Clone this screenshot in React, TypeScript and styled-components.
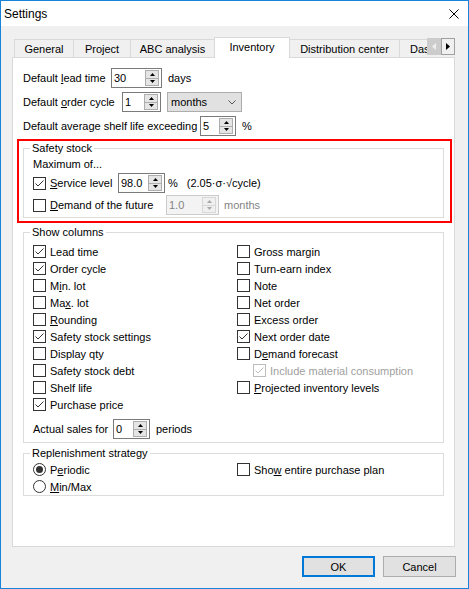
import React from "react";
import styled, { createGlobalStyle, css } from "styled-components";

const GlobalStyle = createGlobalStyle`
  html, body { margin: 0; padding: 0; background: #ffffff; }
  body {
    font-family: "Liberation Sans", Arial, sans-serif;
    font-size: 11px;
    color: #000;
  }
  * { box-sizing: border-box; }
`;

const Window = styled.div`
  width: 469px;
  height: 589px;
  border: 1px solid #1883d7;
  background: #f0f0f0;
  display: flex;
  flex-direction: column;
  overflow: hidden;
`;

const TitleBar = styled.div`
  flex: none;
  height: 25px;
  background: #ffffff;
  display: flex;
  align-items: center;
  justify-content: space-between;
  padding: 0 9px 0 3px;
  font-size: 12px;
`;

const Body = styled.div`
  flex: 1;
  display: flex;
  flex-direction: column;
  padding: 11px 13px 0 11px;
`;

const TabStrip = styled.div`
  position: relative;
  z-index: 1;
  flex: none;
  height: 21px;
  display: flex;
  align-items: flex-end;
  padding-left: 3px;
  overflow: hidden;
`;

const Tab = styled.div<{ $w: number; $active?: boolean; $start?: boolean }>`
  flex: none;
  width: ${(p) => p.$w}px;
  height: 18px;
  margin-bottom: 1px;
  margin-left: -1px;
  border: 1px solid #d9d9d9;
  border-bottom: none;
  background: #f0f0f0;
  display: flex;
  align-items: center;
  justify-content: ${(p) => (p.$start ? "flex-start" : "center")};
  padding: 1px 0 0 ${(p) => (p.$start ? 10 : 0)}px;
  white-space: nowrap;
  ${(p) =>
    p.$active &&
    css`
      position: relative;
      z-index: 1;
      height: 21px;
      margin-bottom: 0;
      background: #ffffff;
      padding-top: 0;
      padding-bottom: 2px;
    `}
`;

const ScrollButtons = styled.div`
  position: absolute;
  top: 1px;
  right: 0;
  z-index: 2;
  display: flex;
`;

const ScrollBtn = styled.div<{ $disabled?: boolean }>`
  width: 14px;
  height: 17px;
  display: flex;
  align-items: center;
  justify-content: center;
  border: 1px solid ${(p) => (p.$disabled ? "#cccccc" : "#a0a0a0")};
  background: ${(p) => (p.$disabled ? "#cccccc" : "#f0f0f0")};
`;

const Pane = styled.div`
  flex: none;
  height: 490px;
  margin-top: -1px;
  background: #ffffff;
  border: 1px solid #d9d9d9;
  padding: 10px 10px 0 10px;
  display: flex;
  flex-direction: column;
`;

const FieldRow = styled.div<{ $gap?: number; $mt?: number }>`
  display: flex;
  align-items: center;
  height: 20px;
  gap: ${(p) => p.$gap ?? 6}px;
  margin-top: ${(p) => p.$mt ?? 0}px;
  white-space: nowrap;
`;

const FieldLabel = styled.span<{ $w: number }>`
  flex: none;
  width: ${(p) => p.$w}px;
  white-space: nowrap;
`;

const Key = styled.span`
  text-decoration: underline;
  text-underline-offset: 1px;
`;

const Muted = styled.span`
  color: #838383;
`;

const Formula = styled.span<{ $ml: number }>`
  margin-left: ${(p) => p.$ml}px;
`;

const SpinBox = styled.div<{ $w: number; $disabled?: boolean }>`
  flex: none;
  width: ${(p) => p.$w}px;
  height: 20px;
  border: 1px solid ${(p) => (p.$disabled ? "#cccccc" : "#7a7a7a")};
  background: ${(p) => (p.$disabled ? "#f3f3f3" : "#ffffff")};
  color: ${(p) => (p.$disabled ? "#838383" : "#000")};
  display: flex;
  align-items: stretch;
  padding: 1px 2px 1px 2px;
`;

const SpinValue = styled.span`
  flex: 1;
  display: flex;
  align-items: center;
  min-width: 0;
`;

const SpinButtons = styled.div<{ $disabled?: boolean }>`
  flex: none;
  width: 14px;
  display: flex;
  flex-direction: column;
  border: 1px solid ${(p) => (p.$disabled ? "#d8d8d8" : "#adadad")};
  background: ${(p) => (p.$disabled ? "#f0f0f0" : "#e5e5e5")};
`;

const SpinHalf = styled.div<{ $disabled?: boolean; $top?: boolean }>`
  flex: 1;
  display: flex;
  align-items: center;
  justify-content: center;
  color: ${(p) => (p.$disabled ? "#a8a8a8" : "#000")};
  ${(p) =>
    p.$top &&
    css`
      border-bottom: 1px solid ${p.$disabled ? "#d8d8d8" : "#adadad"};
    `}
`;

const Combo = styled.div`
  flex: none;
  width: 75px;
  height: 20px;
  border: 1px solid #adadad;
  background: #e1e1e1;
  display: flex;
  align-items: center;
  justify-content: space-between;
  padding: 0 5px 0 3px;
`;

const Highlight = styled.div`
  margin: 3px -8px 0 -6px;
  border: 2px solid #ff0000;
  padding: 0 6px 3px 4px;
`;

const Group = styled.fieldset<{ $mt?: number }>`
  margin: ${(p) => p.$mt ?? 0}px 0 0 0;
  padding: 0;
  min-width: 0;
  border: 1px solid #dcdcdc;
`;

const Legend = styled.legend`
  margin-left: 6px;
  padding: 0 2px;
  line-height: 14px;
  height: 14px;
`;

const GroupBody = styled.div<{ $pt: number; $pb: number }>`
  padding: ${(p) => p.$pt}px 0 ${(p) => p.$pb}px 9px;
  display: flex;
  flex-direction: column;
`;

const PlainLine = styled.div`
  height: 14px;
  line-height: 14px;
`;

const Columns = styled.div`
  display: grid;
  grid-template-columns: 204px 1fr;
`;

const Column = styled.div`
  display: flex;
  flex-direction: column;
`;

const CheckItem = styled.div<{ $indent?: number; $w?: number; $disabled?: boolean; $h?: number }>`
  flex: none;
  display: flex;
  align-items: center;
  gap: 4px;
  height: ${(p) => p.$h ?? 17}px;
  padding-left: ${(p) => p.$indent ?? 0}px;
  width: ${(p) => (p.$w ? `${p.$w}px` : "auto")};
  color: ${(p) => (p.$disabled ? "#a0a0a0" : "#000")};
  white-space: nowrap;
`;

const Box = styled.span<{ $disabled?: boolean }>`
  flex: none;
  width: 13px;
  height: 13px;
  border: 1px solid ${(p) => (p.$disabled ? "#bcbcbc" : "#333333")};
  background: #ffffff;
  display: flex;
  align-items: center;
  justify-content: center;
`;

const RadioCircle = styled.span`
  flex: none;
  width: 13px;
  height: 13px;
  border-radius: 50%;
  border: 1px solid #333333;
  background: #ffffff;
  display: flex;
  align-items: center;
  justify-content: center;
`;

const RadioDot = styled.span`
  width: 7px;
  height: 7px;
  border-radius: 50%;
  background: #333333;
`;

const ButtonRow = styled.div`
  display: flex;
  justify-content: flex-end;
  gap: 8px;
  margin: 9px -1px 0 0;
`;

const Button = styled.div<{ $default?: boolean }>`
  width: 73px;
  height: 21px;
  display: flex;
  align-items: center;
  justify-content: center;
  background: #e1e1e1;
  border: ${(p) => (p.$default ? "2px solid #0078d7" : "1px solid #adadad")};
`;

const Check = ({ color }: { color: string }) => (
  <svg width="11" height="11" viewBox="0 0 11 11">
    <polyline points="1.5,5.5 4,8 9.5,2.5" fill="none" stroke={color} strokeWidth="1" />
  </svg>
);

const Checkbox = ({ checked, disabled }: { checked?: boolean; disabled?: boolean }) => (
  <Box $disabled={disabled}>{checked && <Check color={disabled ? "#bcbcbc" : "#333333"} />}</Box>
);

const UpArrow = () => (
  <svg width="5" height="3" viewBox="0 0 5 3">
    <polygon points="0,3 2.5,0 5,3" fill="currentColor" />
  </svg>
);
const DownArrow = () => (
  <svg width="5" height="3" viewBox="0 0 5 3">
    <polygon points="0,0 5,0 2.5,3" fill="currentColor" />
  </svg>
);

const Spin = ({ value, w, disabled }: { value: string; w: number; disabled?: boolean }) => (
  <SpinBox $w={w} $disabled={disabled}>
    <SpinValue>{value}</SpinValue>
    <SpinButtons $disabled={disabled}>
      <SpinHalf $top $disabled={disabled}>
        <UpArrow />
      </SpinHalf>
      <SpinHalf $disabled={disabled}>
        <DownArrow />
      </SpinHalf>
    </SpinButtons>
  </SpinBox>
);

type Item = { label: React.ReactNode; checked?: boolean; disabled?: boolean; indent?: number };

const leftItems: Item[] = [
  { label: "Lead time", checked: true },
  { label: "Order cycle", checked: true },
  { label: <>M<Key>i</Key>n. lot</> },
  { label: <>Ma<Key>x</Key>. lot</> },
  { label: <><Key>R</Key>ounding</> },
  { label: "Safety stock settings", checked: true },
  { label: "Display qty" },
  { label: "Safety stock debt" },
  { label: "Shelf life" },
  { label: "Purchase price", checked: true },
];

const rightItems: Item[] = [
  { label: "Gross margin" },
  { label: "Turn-earn index" },
  { label: "Note" },
  { label: "Net order" },
  { label: "Excess order" },
  { label: "Next order date", checked: true },
  { label: <>D<Key>e</Key>mand forecast</> },
  { label: "Include material consumption", checked: true, disabled: true, indent: 16 },
  { label: <><Key>P</Key>rojected inventory levels</> },
];

const tabs = [
  { label: "General", w: 60 },
  { label: "Project", w: 58 },
  { label: "ABC analysis", w: 85 },
  { label: "Inventory", w: 76, active: true },
  { label: "Distribution center", w: 111 },
  { label: "Das", w: 78, start: true },
];

export default function App() {
  return (
    <>
      <GlobalStyle />
      <Window>
        <TitleBar>
          <span>Settings</span>
          <svg width="10" height="10" viewBox="0 0 10 10">
            <path d="M0.5 0.5 L9.5 9.5 M9.5 0.5 L0.5 9.5" stroke="#000" strokeWidth="1" fill="none" />
          </svg>
        </TitleBar>
        <Body>
          <TabStrip>
            {tabs.map((t) => (
              <Tab key={t.label} $w={t.w} $active={t.active} $start={t.start}>
                {t.label}
              </Tab>
            ))}
            <ScrollButtons>
              <ScrollBtn $disabled>
                <svg width="4" height="7" viewBox="0 0 4 7">
                  <polygon points="4,0 4,7 0,3.5" fill="#efefef" />
                </svg>
              </ScrollBtn>
              <ScrollBtn>
                <svg width="4" height="7" viewBox="0 0 4 7">
                  <polygon points="0,0 4,3.5 0,7" fill="#000" />
                </svg>
              </ScrollBtn>
            </ScrollButtons>
          </TabStrip>
          <Pane>
            <FieldRow>
              <FieldLabel $w={82}>
                Default <Key>l</Key>ead time
              </FieldLabel>
              <Spin value="30" w={51} />
              <span>days</span>
            </FieldRow>
            <FieldRow $mt={4}>
              <FieldLabel $w={93}>
                Default <Key>o</Key>rder cycle
              </FieldLabel>
              <Spin value="1" w={39} />
              <Combo>
                <span>months</span>
                <svg width="8" height="5" viewBox="0 0 8 5">
                  <polyline points="0.5,0.5 4,4 7.5,0.5" fill="none" stroke="#555" strokeWidth="1" />
                </svg>
              </Combo>
            </FieldRow>
            <FieldRow $mt={4}>
              <FieldLabel $w={171}>Default average shelf life exceeding</FieldLabel>
              <Spin value="5" w={36} />
              <span>%</span>
            </FieldRow>

            <Highlight>
              <Group>
                <Legend>Safety stock</Legend>
                <GroupBody $pt={2} $pb={2}>
                  <PlainLine>Maximum of...</PlainLine>
                  <FieldRow $gap={3} $mt={2}>
                    <CheckItem $w={82} $h={20}>
                      <Checkbox checked />
                      <span>
                        <Key>S</Key>ervice level
                      </span>
                    </CheckItem>
                    <Spin value="98.0" w={47} />
                    <span>%</span>
                    <Formula $ml={6}>(2.05·σ·√cycle)</Formula>
                  </FieldRow>
                  <FieldRow $gap={5} $mt={2}>
                    <CheckItem $w={128} $h={20}>
                      <Checkbox />
                      <span>
                        <Key>D</Key>emand of the future
                      </span>
                    </CheckItem>
                    <Spin value="1.0" w={53} disabled />
                    <Muted>months</Muted>
                  </FieldRow>
                </GroupBody>
              </Group>
            </Highlight>

            <Group $mt={2}>
              <Legend>Show columns</Legend>
              <GroupBody $pt={4} $pb={3}>
                <Columns>
                  <Column>
                    {leftItems.map((it, i) => (
                      <CheckItem key={i} $disabled={it.disabled} $indent={it.indent}>
                        <Checkbox checked={it.checked} disabled={it.disabled} />
                        <span>{it.label}</span>
                      </CheckItem>
                    ))}
                  </Column>
                  <Column>
                    {rightItems.map((it, i) => (
                      <CheckItem key={i} $disabled={it.disabled} $indent={it.indent}>
                        <Checkbox checked={it.checked} disabled={it.disabled} />
                        <span>{it.label}</span>
                      </CheckItem>
                    ))}
                  </Column>
                </Columns>
                <FieldRow $mt={6}>
                  <FieldLabel $w={74}>Actual sales for</FieldLabel>
                  <Spin value="0" w={37} />
                  <span>periods</span>
                </FieldRow>
              </GroupBody>
            </Group>

            <Group $mt={3}>
              <Legend>Replenishment strategy</Legend>
              <GroupBody $pt={1} $pb={0}>
                <Columns>
                  <Column>
                    <CheckItem>
                      <RadioCircle>
                        <RadioDot />
                      </RadioCircle>
                      <span>
                        P<Key>e</Key>riodic
                      </span>
                    </CheckItem>
                    <CheckItem>
                      <RadioCircle />
                      <span>
                        <Key>M</Key>in/Max
                      </span>
                    </CheckItem>
                  </Column>
                  <Column>
                    <CheckItem>
                      <Checkbox />
                      <span>
                        Sho<Key>w</Key> entire purchase plan
                      </span>
                    </CheckItem>
                  </Column>
                </Columns>
              </GroupBody>
            </Group>
          </Pane>
          <ButtonRow>
            <Button $default>OK</Button>
            <Button>Cancel</Button>
          </ButtonRow>
        </Body>
      </Window>
    </>
  );
}
